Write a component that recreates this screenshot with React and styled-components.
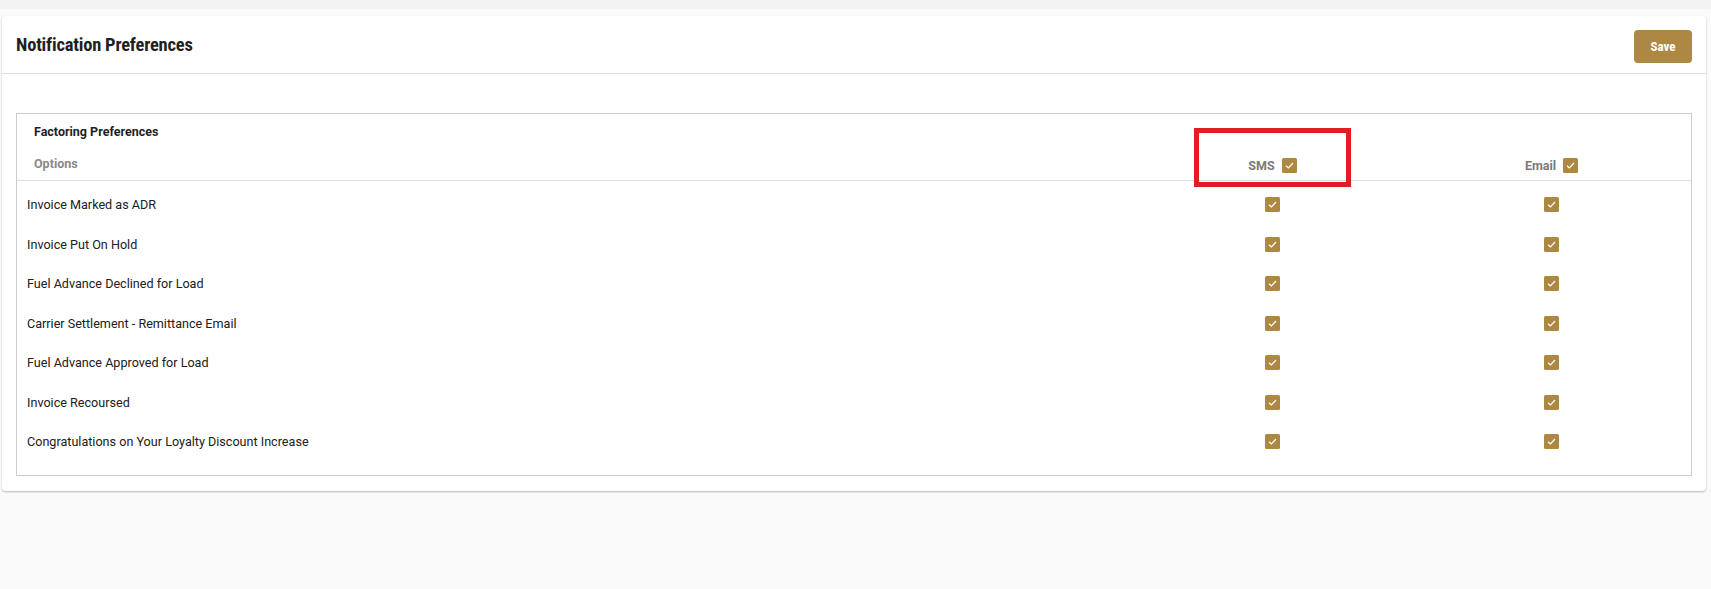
import React, { useState } from 'react';
import styled, { createGlobalStyle } from 'styled-components';

const GlobalStyle = createGlobalStyle`
    html, body {
        margin: 0;
        padding: 0;
        background-color: #fafafa;
        font-family: Roboto, "Liberation Sans", Arial, sans-serif;
    }
`;

const Page = styled.div`
    width: 100%;
    min-height: 589px;
    background-color: #fafafa;
`;
const TopStrip = styled.div`
    height: 9px;
    background-color: #f3f3f3;
`;
const Content = styled.div`
    padding: 7px 5px 0 2px;
`;
const Card = styled.div`
    background-color: #fff;
    border-radius: 4px;
    box-shadow: 0 1px 2px rgba(0, 0, 0, 0.28);
`;
const CardHeader = styled.div`
    height: 57px;
    display: flex;
    align-items: center;
    justify-content: space-between;
    padding: 0 14px;
    border-bottom: 1px solid #e0e0e0;
`;
const Title = styled.h2`
    margin: 0;
    font-size: 18.5px;
    font-weight: 700;
    font-stretch: condensed;
    color: #1f1f1f;
    letter-spacing: -0.2px;
`;
const SaveButton = styled.button`
    width: 58px;
    height: 33px;
    margin-top: 4px;
    border: none;
    border-radius: 4px;
    background-color: #ad8843;
    color: #fff;
    font-family: Roboto, "Liberation Sans", Arial, sans-serif;
    font-size: 13px;
    font-weight: 700;
    font-stretch: condensed;
    cursor: pointer;
`;
const CardBody = styled.div`
    padding: 39px 14px 15px;
`;
const Box = styled.div`
    border: 1px solid #cccccc;
`;
const GroupTitle = styled.div`
    padding: 10px 17px 0;
    font-size: 12.5px;
    line-height: 16px;
    font-weight: 700;
    color: #1f1f1f;
`;
const Grid = styled.div`
    display: grid;
    grid-template-columns: 4fr 1fr 1fr;
`;
const HeaderRow = styled(Grid)`
    height: 40px;
    border-bottom: 1px solid #dddddd;
`;
const OptionsLabel = styled.div`
    padding: 16px 17px 0;
    font-size: 12.5px;
    line-height: 16px;
    font-weight: 700;
    color: #8a8a8a;
`;
const HeaderCell = styled.div`
    position: relative;
    display: flex;
    justify-content: center;
    align-items: center;
    gap: 7px;
    height: 14px;
    margin-top: 18px;
    font-size: 12.5px;
    font-weight: 700;
    color: #7a7a7a;
`;
const Highlight = styled.div`
    position: absolute;
    left: 61px;
    top: -30px;
    width: 157px;
    height: 59px;
    box-sizing: border-box;
    border: 5.5px solid #e31b23;
    pointer-events: none;
`;
const Rows = styled.div`
    padding: 4px 0 13px;
`;
const Row = styled(Grid)`
    height: 39.5px;
    align-items: center;
`;
const RowLabel = styled.div`
    padding-left: 10px;
    font-size: 12.6px;
    color: #202020;
`;
const CheckCell = styled.div`
    display: flex;
    justify-content: center;
`;
const CheckBox = styled.span`
    width: 15px;
    height: 15px;
    display: inline-flex;
    align-items: center;
    justify-content: center;
    border-radius: 1.5px;
    background-color: ${props => props.checked ? '#ad8843' : '#fff'};
    border: ${props => props.checked ? 'none' : '1px solid #999'};
    box-sizing: border-box;
    cursor: pointer;
`;

const Check = ({ checked, onClick }) => (
    <CheckBox checked={checked} onClick={onClick}>
        {checked && (
            <svg width="11" height="11" viewBox="0 0 11 11">
                <path d="M2 5.8 L4.4 8 L9 3" fill="none" stroke="#fff" strokeWidth="1.2" />
            </svg>
        )}
    </CheckBox>
);

const options = [
    'Invoice Marked as ADR',
    'Invoice Put On Hold',
    'Fuel Advance Declined for Load',
    'Carrier Settlement - Remittance Email',
    'Fuel Advance Approved for Load',
    'Invoice Recoursed',
    'Congratulations on Your Loyalty Discount Increase',
];

const App = () => {
    const [prefs, setPrefs] = useState(options.map(() => ({ sms: true, email: true })));

    const toggle = (i, key) => {
        const next = prefs.slice();
        next[i] = { ...next[i], [key]: !next[i][key] };
        setPrefs(next);
    };
    const allSms = prefs.every(p => p.sms);
    const allEmail = prefs.every(p => p.email);
    const toggleAll = (key, value) => {
        setPrefs(prefs.map(p => ({ ...p, [key]: !value })));
    };

    return (
        <Page>
            <GlobalStyle />
            <TopStrip />
            <Content>
                <Card>
                    <CardHeader>
                        <Title>Notification Preferences</Title>
                        <SaveButton>Save</SaveButton>
                    </CardHeader>
                    <CardBody>
                        <Box>
                            <GroupTitle>Factoring Preferences</GroupTitle>
                            <HeaderRow>
                                <OptionsLabel>Options</OptionsLabel>
                                <HeaderCell>
                                    SMS <Check checked={allSms} onClick={() => toggleAll('sms', allSms)} />
                                    <Highlight />
                                </HeaderCell>
                                <HeaderCell>
                                    Email <Check checked={allEmail} onClick={() => toggleAll('email', allEmail)} />
                                </HeaderCell>
                            </HeaderRow>
                            <Rows>
                                {options.map((o, i) => (
                                    <Row key={o}>
                                        <RowLabel>{o}</RowLabel>
                                        <CheckCell><Check checked={prefs[i].sms} onClick={() => toggle(i, 'sms')} /></CheckCell>
                                        <CheckCell><Check checked={prefs[i].email} onClick={() => toggle(i, 'email')} /></CheckCell>
                                    </Row>
                                ))}
                            </Rows>
                        </Box>
                    </CardBody>
                </Card>
            </Content>
        </Page>
    );
};

export default App;
